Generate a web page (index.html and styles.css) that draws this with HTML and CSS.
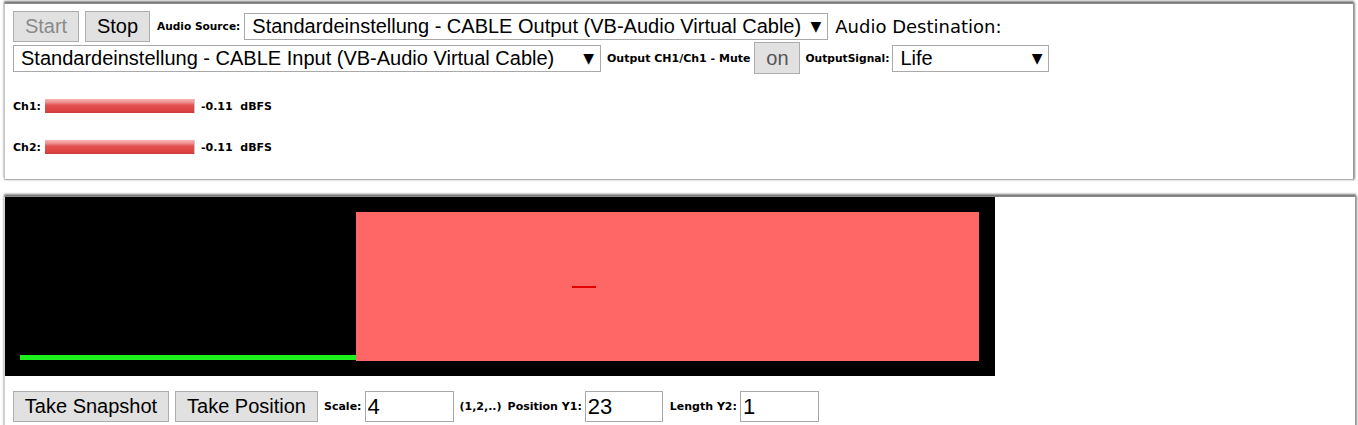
FILE: index.html
```html
<!DOCTYPE html>
<html>
<head>
<meta charset="utf-8">
<link rel="stylesheet" href="styles.css">
</head>
<body>
<div class="panel panel-top">
  <div class="row row1">
    <button class="btn btn-disabled">Start</button>
    <button class="btn">Stop</button>
    <span class="lbl lbl-src">Audio Source:</span>
    <span class="sel sel-src"><select><option>Standardeinstellung - CABLE Output (VB-Audio Virtual Cable)</option></select></span>
    <span class="dest">Audio Destination:</span>
  </div>
  <div class="row row2">
    <span class="sel sel-dst"><select><option>Standardeinstellung - CABLE Input (VB-Audio Virtual Cable)</option></select></span>
    <span class="lbl lbl-mute">Output CH1/Ch1 - Mute</span>
    <button class="btn btn-on">on</button>
    <span class="lbl lbl-sig">OutputSignal:</span>
    <span class="sel sel-sig"><select><option>Life</option></select></span>
  </div>
  <div class="meters">
    <div class="meter"><span class="lbl">Ch1:</span><span class="bar"></span><span class="lbl val">-0.11  dBFS</span></div>
    <div class="meter"><span class="lbl">Ch2:</span><span class="bar"></span><span class="lbl val">-0.11  dBFS</span></div>
  </div>
</div>
<div class="panel panel-bottom">
  <div class="scope">
    <svg width="990" height="179" viewBox="0 0 990 179">
      <rect x="0" y="0" width="990" height="179" fill="#000"/>
      <rect x="351" y="15" width="623" height="149" fill="#ff6666"/>
      <rect x="15" y="158" width="336" height="5" fill="#1ef01e"/>
      <rect x="567" y="89" width="24" height="2" fill="#e30000"/>
    </svg>
  </div>
  <div class="row row3">
    <button class="btn btn-snap">Take Snapshot</button>
    <button class="btn btn-pos">Take Position</button>
    <span class="lbl">Scale:</span>
    <input class="inp inp-scale" type="text" value="4">
    <span class="lbl lbl-hint">(1,2,..)</span>
    <span class="lbl">Position Y1:</span>
    <input class="inp inp-y1" type="text" value="23">
    <span class="lbl lbl-len">Length Y2:</span>
    <input class="inp inp-y2" type="text" value="1">
  </div>
</div>
</body>
</html>
```
FILE: styles.css
```css
html, body {
  margin: 0;
  padding: 0;
  background: #fff;
  overflow: hidden;
}
body {
  padding: 3px 2px 0 4px;
  font-family: "Liberation Sans", Arial, sans-serif;
  color: #000;
}
.panel {
  width: 1350px;
  border: 1px solid #c8c8c8;
  border-top-color: #8a8a8a;
  border-right-color: #9a9a9a;
  border-bottom-color: #b0b0b0;
  box-shadow: 0 -2px 2px rgba(0,0,0,0.5), 1px 0 2px rgba(0,0,0,0.3);
  background: #fff;
}
.panel-top {
  padding: 6px 0 0 8px;
  box-sizing: border-box;
  height: 177px;
}
.panel-bottom {
  margin-top: 16px;
  height: 240px;
  border-left-color: #d0d0d0;
}
.row {
  display: flex;
  align-items: center;
}
.row1 { height: 32px; }
.row2 { height: 32px; }
.lbl {
  font-family: "DejaVu Sans", Verdana, sans-serif;
  font-weight: bold;
  font-size: 11px;
  white-space: pre;
}
.lbl-src { font-size: 10.6px; }
.btn {
  font-family: "Liberation Sans", Arial, sans-serif;
  font-size: 20px;
  height: 31px;
  padding: 0 10px;
  background: #e1e1e1;
  border: 1px solid #adadad;
  border-radius: 0;
  color: #000;
  margin: 0;
  line-height: 29px;
}
.btn-disabled { color: #8a8a8a; width: 66px; }
.row1 .btn + .btn { margin-left: 6px; width: 65px; }
.lbl-src { margin-left: 7px; }
.sel {
  position: relative;
  display: inline-block;
}
.sel::after {
  content: "\25BC";
  position: absolute;
  right: 7px;
  top: 50%;
  transform: translateY(-50%);
  font-size: 14px;
  pointer-events: none;
  font-family: "DejaVu Sans", sans-serif;
}
.sel select {
  -webkit-appearance: none;
  appearance: none;
  font-family: "Liberation Sans", Arial, sans-serif;
  font-size: 20px;
  height: 27px;
  border: 1px solid #a9a9a9;
  border-radius: 0;
  background: #fff;
  color: #000;
  padding: 0 0 0 7px;
  margin: 0;
  line-height: 25px;
  outline: none;
}
.sel-src { margin-left: 4px; }
.sel-src select { width: 584px; }
.dest {
  font-family: "DejaVu Sans", Verdana, sans-serif;
  font-size: 18px;
  margin-left: 7px;
}
.sel-dst select { width: 588px; }
.lbl-mute { margin-left: 6px; }
.btn-on {
  margin-left: 4px;
  width: 46px;
  height: 32px;
  padding: 0;
  color: #555;
}
.lbl-sig { margin-left: 5px; font-size: 10.7px; }
.sel-sig { margin-left: 3px; }
.sel-sig select { width: 157px; }
.meters {
  padding-top: 25px;
}
.meter {
  display: flex;
  height: 41px;
  align-items: flex-start;
}
.meter .lbl { line-height: 15px; }
.bar {
  display: inline-block;
  width: 149px;
  height: 14px;
  margin-left: 4px;
  background: linear-gradient(#f6b4b4 0%, #f19898 20%, #e25050 45%, #dd4444 80%, #cf3a3a 100%);
  border-right: 1px solid #c8c8c8;
}
.val { margin-left: 6px; }
.scope {
  height: 179px;
  width: 990px;
}
.scope svg { display: block; }
.row3 {
  padding: 15px 0 0 8px;
}
.btn-snap { width: 156px; }
.btn-pos { width: 143px; margin-left: 6px; }
.row3 .lbl { margin-left: 6px; }
.row3 .inp { margin-left: 3px; }
.row3 .lbl-len { margin-left: 7px; }
.inp {
  font-family: "Liberation Sans", Arial, sans-serif;
  font-size: 22px;
  height: 31px;
  box-sizing: border-box;
  border: 1px solid #a9a9a9;
  padding: 0 2px;
  margin: 0;
  outline: none;
}
.inp-scale { width: 89px; }
.inp-y1 { width: 78px; }
.inp-y2 { width: 79px; }
```
